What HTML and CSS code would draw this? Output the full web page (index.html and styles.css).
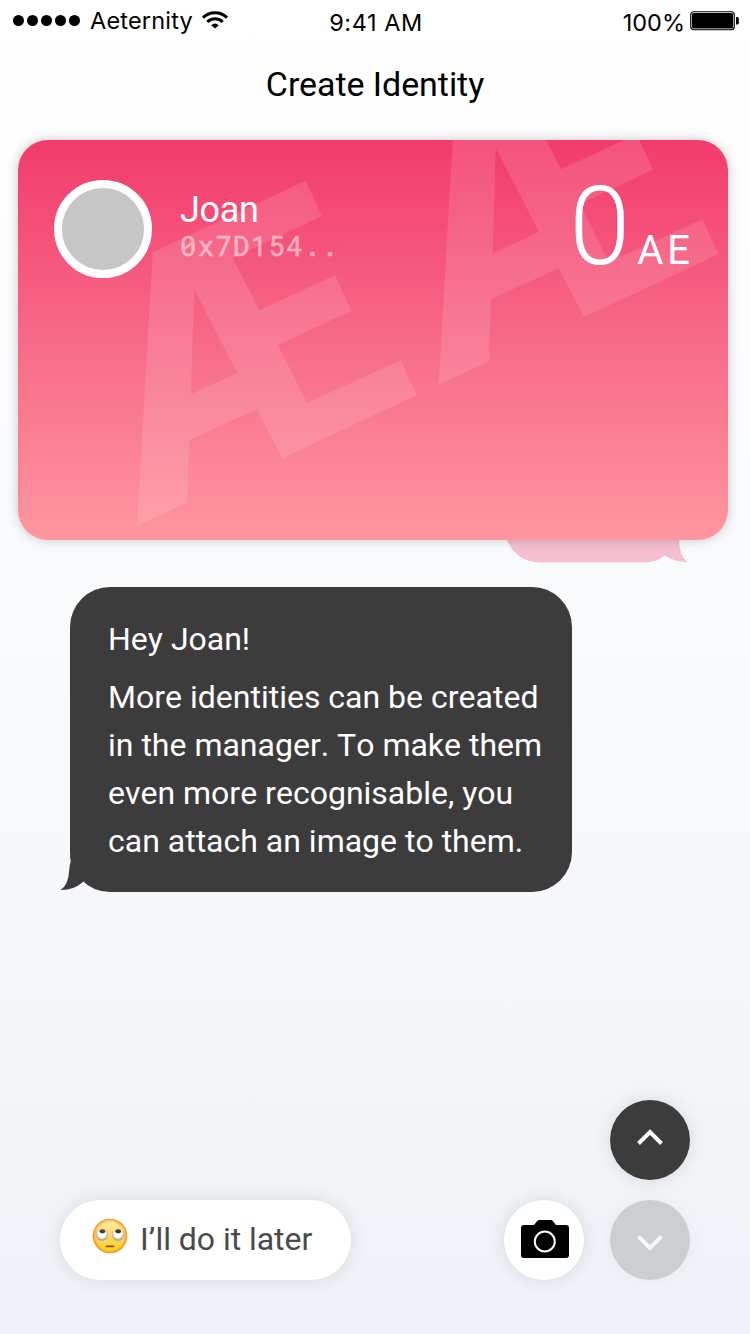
FILE: index.html
```html
<!DOCTYPE html>
<html lang="en">
<head>
<meta charset="utf-8">
<title>Create Identity</title>
<link rel="stylesheet" href="styles.css">
</head>
<body>
<div class="screen">
  <header class="status">
    <div class="status-left">
      <span class="signal"><i></i><i></i><i></i><i></i><i></i></span>
      <span class="carrier">Aeternity</span>
      <svg class="wifi" width="26" height="19" viewBox="0 0 26 19">
        <g fill="none" stroke="#000" stroke-width="3">
          <path d="M1 6.6a17 17 0 0 1 24 0"/>
          <path d="M5.3 11a11 11 0 0 1 15.4 0"/>
        </g>
        <path d="M13 17.600 9.200 14.200a5.800 5.800 0 0 1 7.600 0z"/>
      </svg>
    </div>
    <span class="clock">9:41 AM</span>
    <div class="status-right">
      <span class="percent">100%</span>
      <svg class="battery" width="49" height="20" viewBox="0 0 49 20">
        <rect x=".75" y=".75" width="43.5" height="18" rx="3" fill="none" stroke="#000" stroke-width="1.2"/>
        <rect x="2" y="2" width="41" height="15.5" rx="1.6"/>
        <path d="M46 6h1.2q1.6 0 1.6 1.6v4.3q0 1.6-1.6 1.6H46z"/>
      </svg>
    </div>
  </header>

  <h1 class="title">Create Identity</h1>

  <section class="card">
    <svg class="watermark" width="710" height="400" viewBox="18 140 710 400">
      <defs>
        <path id="ae" fill-rule="evenodd" d="M137 525.7 152.7 252.3 305.7 180.7 322 216 232.7 258 259.3 310.3 335 275.3 351.3 310.7 278 345 307 403 400.7 360.3 416.7 395.3 282.3 458 256.7 409.3 189.3 440.3 187.3 502.3zM194 289.3 237.3 372.7 191 394.3z"/>
      </defs>
      <use href="#ae"/>
      <use href="#ae" x="301.700" y="-141"/>
    </svg>
    <div class="avatar"></div>
    <div class="who">
      <div class="name">Joan</div>
      <div class="address">0x7D154..</div>
    </div>
    <div class="balance"><span class="amount">0</span><span class="unit">AE</span></div>
  </section>

  <div class="reply">
    <svg width="184" height="83" viewBox="504 480 184 83">
      <path d="M504 480V530C508 549 520 562.500 541 562.500H644Q656 562.500 665 555.500Q675 562.500 688 562Q679.500 557 679.200 540V480z"/>
    </svg>
  </div>

  <section class="message">
    <svg class="tail" width="26" height="40" viewBox="60 855 26 40">
      <path d="M70 855 70.800 861Q69.500 865 69.200 870Q68.500 885 60.500 890Q73 890.500 83 882L86 862z"/>
    </svg>
    <p>Hey Joan!</p>
    <p>More identities can be created<br>in the manager. To make them<br>even more recognisable, you<br>can attach an image to them.</p>
  </section>

  <footer class="actions">
    <button class="later">
      <svg width="36" height="36" viewBox="0 0 36 36">
        <defs>
          <linearGradient id="face" x1="0" y1="0" x2="0" y2="1">
            <stop offset="0" stop-color="#fdf0b4"/><stop offset=".5" stop-color="#fbd65c"/><stop offset="1" stop-color="#fdd61c"/>
          </linearGradient>
          <radialGradient id="rim"><stop offset=".78" stop-color="#f79a2c" stop-opacity="0"/><stop offset="1" stop-color="#f78d22"/></radialGradient>
          <radialGradient id="eye" cy=".4"><stop offset=".6" stop-color="#fff"/><stop offset="1" stop-color="#b4a99a"/></radialGradient>
        </defs>
        <circle cx="18" cy="18" r="17.300" fill="url(#face)"/>
        <circle cx="18" cy="18" r="17.300" fill="url(#rim)"/>
        <circle cx="10" cy="17" r="6" fill="url(#eye)"/>
        <circle cx="26" cy="17" r="6" fill="url(#eye)"/>
        <ellipse cx="10.400" cy="13.300" rx="2.800" ry="2" fill="#47372e"/>
        <ellipse cx="26.200" cy="13.300" rx="2.800" ry="2" fill="#47372e"/>
        <path d="M14.500 28.300h7" stroke="#8a4a12" stroke-width="1.800" stroke-linecap="round"/>
      </svg>
      <span>I’ll do it later</span>
    </button>
    <button class="round camera" aria-label="Take a photo">
      <svg width="48" height="38" viewBox="0 0 48 38">
        <path d="M3 5h10l3-3.800Q17 0 18.500 0h11Q31 0 32 1.200L35 5h10q3 0 3 3v27q0 3-3 3H3q-3 0-3-3V8q0-3 3-3z"/>
        <circle cx="23.800" cy="21.500" r="10" fill="none" stroke="#fff" stroke-width="2"/>
      </svg>
    </button>
    <div class="pager">
      <button class="round up" aria-label="Up">
        <svg width="26" height="16" viewBox="0 0 26 16"><path d="M1.500 14.500 13 3l11.500 11.500"/></svg>
      </button>
      <button class="round down" aria-label="Down">
        <svg width="26" height="16" viewBox="0 0 26 16"><path d="M1.500 1.500 13 13 24.500 1.500"/></svg>
      </button>
    </div>
  </footer>
</div>
</body>
</html>
```
FILE: styles.css
```css
* { box-sizing: border-box; }
body, p, h1 { margin: 0; }
body { font-family: Roboto, sans-serif; }
button { border: 0; padding: 0; font: inherit; }
svg { display: block; flex: none; }

.screen {
  width: 750px;
  height: 1334px;
  display: flex;
  flex-direction: column;
  overflow: hidden;
  background: linear-gradient(#fff, #f9fafc 45%, #f4f6f9 75%, #eef2f6);
}

.status {
  height: 40px;
  flex: none;
  display: grid;
  grid-template-columns: 1fr auto 1fr;
  padding: 0 11px 0 13px;
  font: 23.500px/40px Inter, sans-serif;
}
.status-left, .status-right { display: flex; align-items: flex-start; }
.status-right { justify-content: flex-end; }
.signal { display: flex; gap: 3px; padding-top: 15px; }
.signal i { width: 11px; height: 11px; border-radius: 50%; background: #000; }
.carrier { margin-left: 10px; padding-top: 1px; letter-spacing: .200px; }
.wifi { margin: 11px 0 0 9px; }
.clock, .percent { padding-top: 3px; }
.clock { letter-spacing: .550px; }
.battery { margin: 11px 0 0 5px; }

.title {
  flex: none;
  height: 100px;
  padding-top: 24px;
  font-size: 34px;
  line-height: 40px;
  font-weight: 400;
  letter-spacing: -.060px;
  text-align: center;
}

.card {
  position: relative;
  z-index: 1;
  flex: none;
  width: 710px;
  height: 400px;
  margin-left: 18px;
  padding: 40px 36px;
  display: flex;
  align-items: flex-start;
  border-radius: 30px;
  overflow: hidden;
  color: #fff;
  background: linear-gradient(#f23b6c, #f76a87 50%, #ff969f);
  box-shadow: 0 0 12px rgba(0, 0, 0, .21);
}
.watermark { position: absolute; inset: 0; fill: rgba(255, 255, 255, .12); }
.avatar {
  position: relative;
  width: 98px;
  height: 98px;
  border: 8px solid #fff;
  border-radius: 50%;
  background: #c6c6c6;
}
.who { position: relative; margin-left: 28px; padding-top: 9px; }
.name { font-size: 36px; line-height: 42px; letter-spacing: -.300px; }
.address {
  margin-top: -1px;
  font: 27px/32px "Roboto Mono", "DejaVu Sans Mono", monospace;
  letter-spacing: 1.500px;
  -webkit-text-stroke: .600px #fff;
  opacity: .5;
}
.balance {
  position: relative;
  margin-left: auto;
  padding-top: 2px;
  display: flex;
  align-items: baseline;
  line-height: 90px;
}
.amount { font-size: 110px; font-weight: 300; }
.unit { margin: 0 -2px 0 7px; font-size: 40px; letter-spacing: 4px; }

.reply { height: 83px; flex: none; margin: -60px 62px 0 auto; fill: #f6bfcf; }

.message {
  position: relative;
  flex: none;
  width: 502px;
  height: 305px;
  margin: 24px 0 0 70px;
  padding: 28px 20px 26px 38px;
  border-radius: 40px;
  background: #3c3c3c;
  color: #fff;
  font-size: 32px;
  line-height: 48px;
  font-kerning: none;
  white-space: nowrap;
}
.message p + p { margin-top: 10px; }
.tail { position: absolute; left: -10px; top: 268px; fill: #3c3c3c; }

.actions {
  margin-top: auto;
  padding: 0 60px 54px;
  display: flex;
  align-items: flex-end;
}
.later {
  width: 291px;
  height: 80px;
  padding-left: 32px;
  display: flex;
  align-items: center;
  gap: 12px;
  border-radius: 40px;
  background: #fff;
  color: #4a4a4a;
  font-size: 32px;
  letter-spacing: -.050px;
  box-shadow: 0 0 20px rgba(0, 0, 0, .1);
}
.later svg { margin-bottom: 8px; }
.later span { padding-bottom: 2px; }
.round {
  width: 80px;
  height: 80px;
  border-radius: 50%;
  display: flex;
  align-items: center;
  justify-content: center;
}
.camera { margin-left: auto; background: #fff; box-shadow: 0 0 20px rgba(0, 0, 0, .1); }
.camera svg { margin: 0 0 2px 1px; }
.pager { margin-left: 26px; display: flex; flex-direction: column; gap: 20px; }
.pager path { fill: none; stroke: #fff; stroke-width: 4; }
.up { background: #3c3c3c; box-shadow: 0 0 20px rgba(0, 0, 0, .1); }
.up svg { margin-bottom: 6px; }
.down { background: #cbcfd1; box-shadow: 0 0 20px rgba(0, 0, 0, .04); }
.down svg { margin-top: 6px; }
.down path { stroke: #f4f6f7; }
```
